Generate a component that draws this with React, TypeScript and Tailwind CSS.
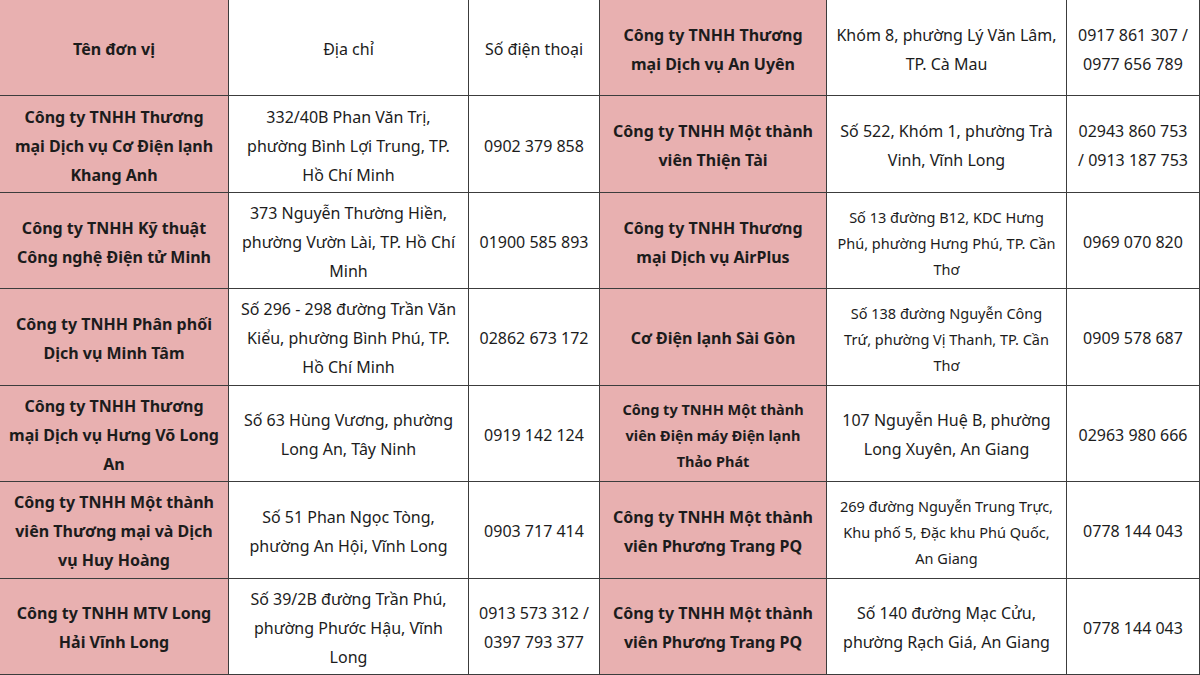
import React from "react";

type Cell = { lines: string[]; bold?: boolean; pink?: boolean; small?: boolean };

const N = (lines: string[], small = false): Cell => ({ lines, bold: true, pink: true, small });
const T = (lines: string[], small = false): Cell => ({ lines, small });

const leftRows: Cell[][] = [
  [N(["Tên đơn vị"]), T(["Địa chỉ"]), T(["Số điện thoại"])],
  [
    N(["Công ty TNHH Thương", "mại Dịch vụ Cơ Điện lạnh", "Khang Anh"]),
    T(["332/40B Phan Văn Trị,", "phường Bình Lợi Trung, TP.", "Hồ Chí Minh"]),
    T(["0902 379 858"]),
  ],
  [
    N(["Công ty TNHH Kỹ thuật", "Công nghệ Điện tử Minh"]),
    T(["373 Nguyễn Thường Hiền,", "phường Vườn Lài, TP. Hồ Chí", "Minh"]),
    T(["01900 585 893"]),
  ],
  [
    N(["Công ty TNHH Phân phối", "Dịch vụ Minh Tâm"]),
    T(["Số 296 - 298 đường Trần Văn", "Kiểu, phường Bình Phú, TP.", "Hồ Chí Minh"]),
    T(["02862 673 172"]),
  ],
  [
    N(["Công ty TNHH Thương", "mại Dịch vụ Hưng Võ Long", "An"]),
    T(["Số 63 Hùng Vương, phường", "Long An, Tây Ninh"]),
    T(["0919 142 124"]),
  ],
  [
    N(["Công ty TNHH Một thành", "viên Thương mại và Dịch", "vụ Huy Hoàng"]),
    T(["Số 51 Phan Ngọc Tòng,", "phường An Hội, Vĩnh Long"]),
    T(["0903 717 414"]),
  ],
  [
    N(["Công ty TNHH MTV Long", "Hải Vĩnh Long"]),
    T(["Số 39/2B đường Trần Phú,", "phường Phước Hậu, Vĩnh", "Long"]),
    T(["0913 573 312 /", "0397 793 377"]),
  ],
];

const rightRows: Cell[][] = [
  [
    N(["Công ty TNHH Thương", "mại Dịch vụ An Uyên"]),
    T(["Khóm 8, phường Lý Văn Lâm,", "TP. Cà Mau"]),
    T(["0917 861 307 /", "0977 656 789"]),
  ],
  [
    N(["Công ty TNHH Một thành", "viên Thiện Tài"]),
    T(["Số 522, Khóm 1, phường Trà", "Vinh, Vĩnh Long"]),
    T(["02943 860 753", "/ 0913 187 753"]),
  ],
  [
    N(["Công ty TNHH Thương", "mại Dịch vụ AirPlus"]),
    T(["Số 13 đường B12, KDC Hưng", "Phú, phường Hưng Phú, TP. Cần", "Thơ"], true),
    T(["0969 070 820"]),
  ],
  [
    N(["Cơ Điện lạnh Sài Gòn"]),
    T(["Số 138 đường Nguyễn Công", "Trứ, phường Vị Thanh, TP. Cần", "Thơ"], true),
    T(["0909 578 687"]),
  ],
  [
    N(["Công ty TNHH Một thành", "viên Điện máy Điện lạnh", "Thảo Phát"], true),
    T(["107 Nguyễn Huệ B, phường", "Long Xuyên, An Giang"]),
    T(["02963 980 666"]),
  ],
  [
    N(["Công ty TNHH Một thành", "viên Phương Trang PQ"]),
    T(["269 đường Nguyễn Trung Trực,", "Khu phố 5, Đặc khu Phú Quốc,", "An Giang"], true),
    T(["0778 144 043"]),
  ],
  [
    N(["Công ty TNHH Một thành", "viên Phương Trang PQ"]),
    T(["Số 140 đường Mạc Cửu,", "phường Rạch Giá, An Giang"]),
    T(["0778 144 043"]),
  ],
];

function CellView({ c, last }: { c: Cell; last: boolean }) {
  return (
    <div
      className={
        "flex flex-col items-center justify-center text-center border-r border-b border-[#3c3c3c] pt-[4px] " +
        (c.pink ? "bg-[#e8b0b0] " : "bg-white ") +
        (c.bold ? "font-bold " : "font-normal ") +
        (c.small ? "text-[14.5px] leading-[26px] " : "text-[16px] leading-[29px] ") +
        (last ? "" : "")
      }
    >
      {c.lines.map((l, i) => (
        <div key={i} className="whitespace-nowrap">
          {l}
        </div>
      ))}
    </div>
  );
}

function Table({ rows, cols }: { rows: Cell[][]; cols: string }) {
  return (
    <div className={"grid grid-rows-7 h-[675px] " + cols}>
      {rows.map((r, ri) =>
        r.map((c, ci) => <CellView key={ri + "-" + ci} c={c} last={ri === rows.length - 1} />)
      )}
    </div>
  );
}

export default function App() {
  return (
    <div
      className="w-[1200px] h-[675px] overflow-hidden flex bg-white text-[#1c1c1c]"
      style={{ fontFamily: '"Noto Sans", "Open Sans", sans-serif' }}
    >
      <div className="w-[600px]">
        <Table rows={leftRows} cols="grid-cols-[229px_240px_131px]" />
      </div>
      <div className="w-[600px]">
        <Table rows={rightRows} cols="grid-cols-[227px_240px_133px]" />
      </div>
    </div>
  );
}
